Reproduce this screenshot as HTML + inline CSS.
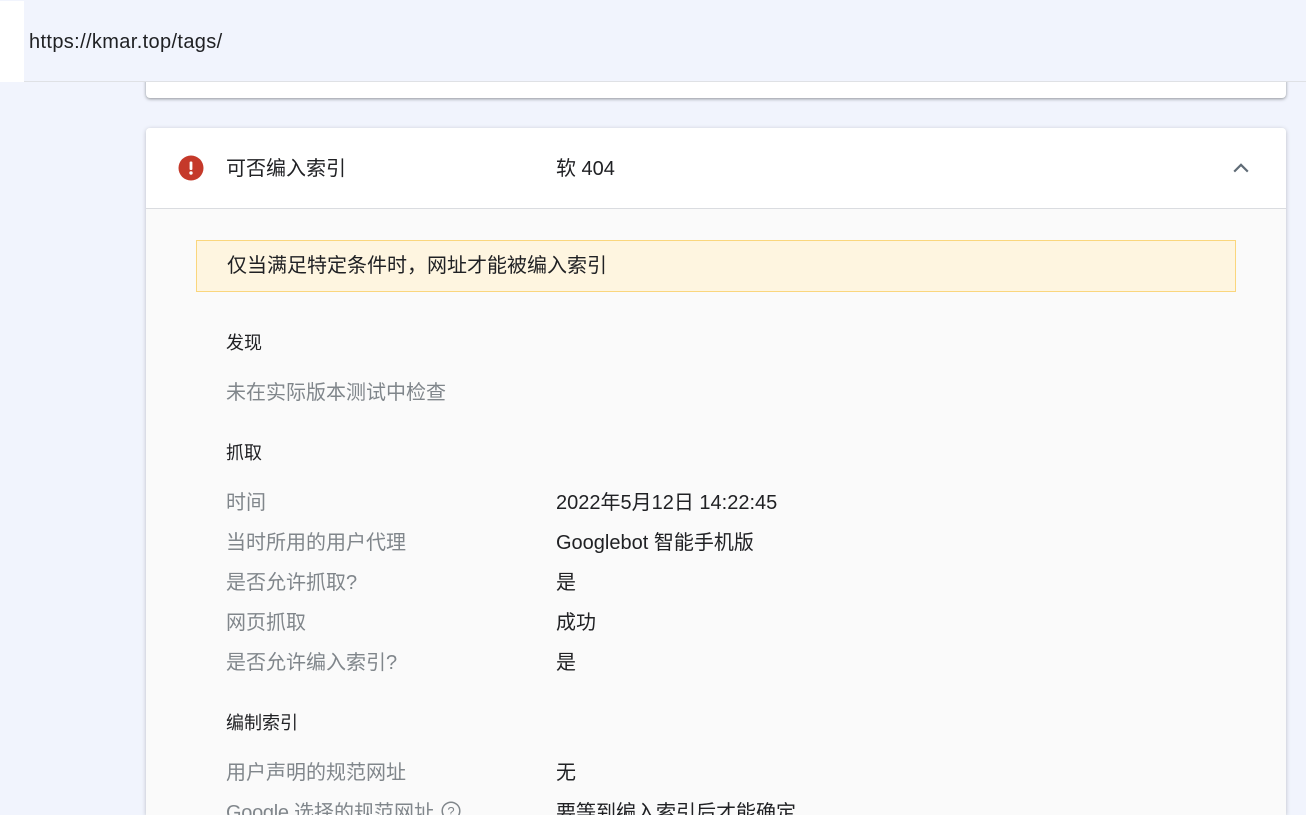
<!DOCTYPE html>
<html lang="zh-CN">
<head>
<meta charset="utf-8">
<title>kmar.top</title>
<style>
html,body{margin:0;padding:0;width:1306px;height:815px;overflow:hidden;background:#f1f4fd;}
body{position:relative;font-family:"Liberation Sans","Noto Sans CJK SC",sans-serif;color:#202124;font-size:20px;}
.t{position:absolute;white-space:nowrap;line-height:30px;height:30px;}
.g{color:#80868b;}
.h{font-size:18px;color:#202124;}
.clip{height:17px;overflow:hidden;}
#top{position:absolute;left:0;top:0;width:1306px;height:81px;background:#f1f4fd;border-bottom:1px solid #dfe1e5;z-index:5;}
#wh{position:absolute;left:0;top:1px;width:24px;height:81px;background:#fff;z-index:6;}
#url{position:absolute;left:29px;top:27px;line-height:30px;font-size:20px;letter-spacing:.36px;color:#202124;z-index:7;white-space:nowrap;}
#c1{position:absolute;left:146px;top:40px;width:1140px;height:58px;background:#fff;border-radius:0 0 4px 4px;box-shadow:0 1px 3px rgba(60,64,67,.55);}
#c2{position:absolute;left:146px;top:128px;width:1140px;height:687px;background:#fafafa;border-radius:4px 4px 0 0;box-shadow:0 1px 4px rgba(60,64,67,.3);}
#head{position:absolute;left:0;top:0;width:1140px;height:80px;background:#fff;border-bottom:1px solid #dadce0;border-radius:4px 4px 0 0;}
#warn{position:absolute;left:196px;top:240px;width:1038px;height:50px;background:#fef5e0;border:1px solid #fad67d;}
</style>
</head>
<body>
<div id="c1"></div>
<div id="c2"><div id="head"></div></div>
<div id="top"></div>
<div id="wh"></div>
<div id="url">https://kmar.top/tags/</div>

<svg style="position:absolute;left:178px;top:155px" width="26" height="26" viewBox="0 0 26 26"><circle cx="13" cy="13" r="12.500" fill="#c5392a"/><rect x="11.600" y="6.500" width="2.800" height="8.500" rx="1" fill="#fff"/><circle cx="13" cy="18" r="1.700" fill="#fff"/></svg>
<div class="t" style="left:226px;top:154px">可否编入索引</div>
<div class="t" style="left:556px;top:154px">软 404</div>
<svg style="position:absolute;left:1232px;top:161px" width="18" height="14" viewBox="0 0 18 14"><path d="M2.200 10.600L9 3.800l6.800 6.800" fill="none" stroke="#5f6b76" stroke-width="2.200"/></svg>

<div id="warn"></div>
<div class="t" style="left:227px;top:251px">仅当满足特定条件时，网址才能被编入索引</div>

<div class="t h" style="left:226px;top:328px">发现</div>
<div class="t g" style="left:226px;top:378px">未在实际版本测试中检查</div>

<div class="t h" style="left:226px;top:438px">抓取</div>
<div class="t g" style="left:226px;top:488px">时间</div>
<div class="t" style="left:556px;top:488px">2022年5月12日 14:22:45</div>
<div class="t g" style="left:226px;top:528px">当时所用的用户代理</div>
<div class="t" style="left:556px;top:528px">Googlebot 智能手机版</div>
<div class="t g" style="left:226px;top:568px">是否允许抓取?</div>
<div class="t" style="left:556px;top:568px">是</div>
<div class="t g" style="left:226px;top:608px">网页抓取</div>
<div class="t" style="left:556px;top:608px">成功</div>
<div class="t g" style="left:226px;top:648px">是否允许编入索引?</div>
<div class="t" style="left:556px;top:648px">是</div>

<div class="t h" style="left:226px;top:708px">编制索引</div>
<div class="t g" style="left:226px;top:758px">用户声明的规范网址</div>
<div class="t" style="left:556px;top:758px">无</div>
<div class="t g clip" style="left:226px;top:798px"><span style="letter-spacing:-.3px">Google </span>选择的规范网址</div>
<svg style="position:absolute;left:440px;top:801px" width="22" height="14" viewBox="0 0 22 14"><circle cx="11" cy="10" r="8.800" fill="none" stroke="#80868b" stroke-width="1.500"/><text x="11" y="15" font-size="13" text-anchor="middle" fill="#80868b" font-family="Liberation Sans">?</text></svg>
<div class="t clip" style="left:556px;top:798px">要等到编入索引后才能确定</div>
</body>
</html>
